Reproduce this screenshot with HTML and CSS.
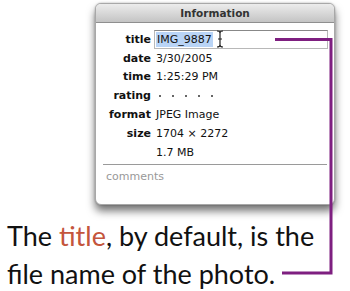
FILE: index.html
```html
<!DOCTYPE html>
<html lang="en">

<head>
    <meta charset="UTF-8">
    <meta name="viewport" content="width=device-width, initial-scale=1.0">
    <title>Information</title>
    <link rel="stylesheet" href="styles.css">
</head>

<body>
    <div class="page">
        <div class="window">
            <div class="titlebar">Information</div>
            <div class="info">
                <span class="label">title</span>
                <span class="field">
                    <span class="sel">IMG_9887</span>
                    <svg class="ibeam" width="8" height="18" viewBox="0 0 8 18">
                        <path d="M1 1 Q4 1 4 3 L4 15 Q4 17 1 17 M7 1 Q4 1 4 3 M4 15 Q4 17 7 17 M2 9 L6 9" fill="none" stroke="#222" stroke-width="1.2" />
                    </svg>
                </span>
                <span class="label">date</span>
                <span class="value">3/30/2005</span>
                <span class="label">time</span>
                <span class="value">1:25:29 PM</span>
                <span class="label">rating</span>
                <span class="value dots"><i></i><i></i><i></i><i></i><i></i></span>
                <span class="label">format</span>
                <span class="value">JPEG Image</span>
                <span class="label">size</span>
                <span class="value">1704 × 2272</span>
                <span class="label"></span>
                <span class="value">1.7 MB</span>
            </div>
            <div class="sep"></div>
            <div class="comments">comments</div>
        </div>
        <p class="caption">The <span class="hl">title</span>, by default, is the<br>file name of the photo.</p>
        <!-- callout line from the title field down to the caption -->
        <svg class="callout" width="350" height="291" viewBox="0 0 350 291">
            <polyline points="275,39.5 331,39.5 331,273 282,273" fill="none" stroke="#7e1f80" stroke-width="3" />
        </svg>
    </div>
</body>

</html>
```

FILE: styles.css
```css
* {
    box-sizing: border-box;
    margin: 0;
    padding: 0;
}

body {
    background-color: #fff;
    font-family: "DejaVu Sans", sans-serif;
}

.page {
    position: relative;
    width: 350px;
    height: 291px;
    overflow: hidden;
    padding-top: 3px;
}

.window {
    margin-left: 95px;
    width: 240px;
    height: 202px;
    background-color: #fff;
    border: 1px solid #a8a8a8;
    border-radius: 6px;
    box-shadow: 0 6px 9px rgba(0, 0, 0, 0.55), 0 0 2px rgba(0, 0, 0, 0.3);
    overflow: hidden;
}

.titlebar {
    height: 19px;
    background: linear-gradient(#ececec, #c4c4c4);
    border-bottom: 1px solid #8f8f8f;
    text-align: center;
    font-size: 10.5px;
    font-weight: bold;
    line-height: 18px;
    color: #333;
}

.info {
    display: grid;
    grid-template-columns: 55px 1fr;
    grid-auto-rows: 18.8px;
    column-gap: 3px;
    padding-top: 7px;
    padding-right: 6px;
    font-size: 11px;
    color: #111;
    align-items: center;
}

.label {
    text-align: right;
    font-weight: bold;
}

.value {
    padding-left: 2px;
}

.field {
    display: flex;
    align-items: center;
    height: 19px;
    border: 1px solid #b8b8b8;
    border-top-color: #888;
    padding-left: 1px;
    gap: 3px;
}

.sel {
    background-color: #b9d4f6;
    padding: 1px 1px;
}

.dots {
    display: flex;
    gap: 11px;
    padding-left: 5px;
}

.dots i {
    width: 2px;
    height: 2px;
    background-color: #666;
}

.sep {
    margin: 2px 7px 0;
    height: 1px;
    background-color: #9a9a9a;
}

.comments {
    padding: 5px 0 0 10px;
    font-size: 11px;
    color: #999;
}

.caption {
    margin: 12px 0 0 7px;
    font-family: Lato, sans-serif;
    font-size: 27px;
    line-height: 38px;
    color: #111;
}

.hl {
    color: #c4553c;
}

.callout {
    position: absolute;
    left: 0;
    top: 0;
}
```
